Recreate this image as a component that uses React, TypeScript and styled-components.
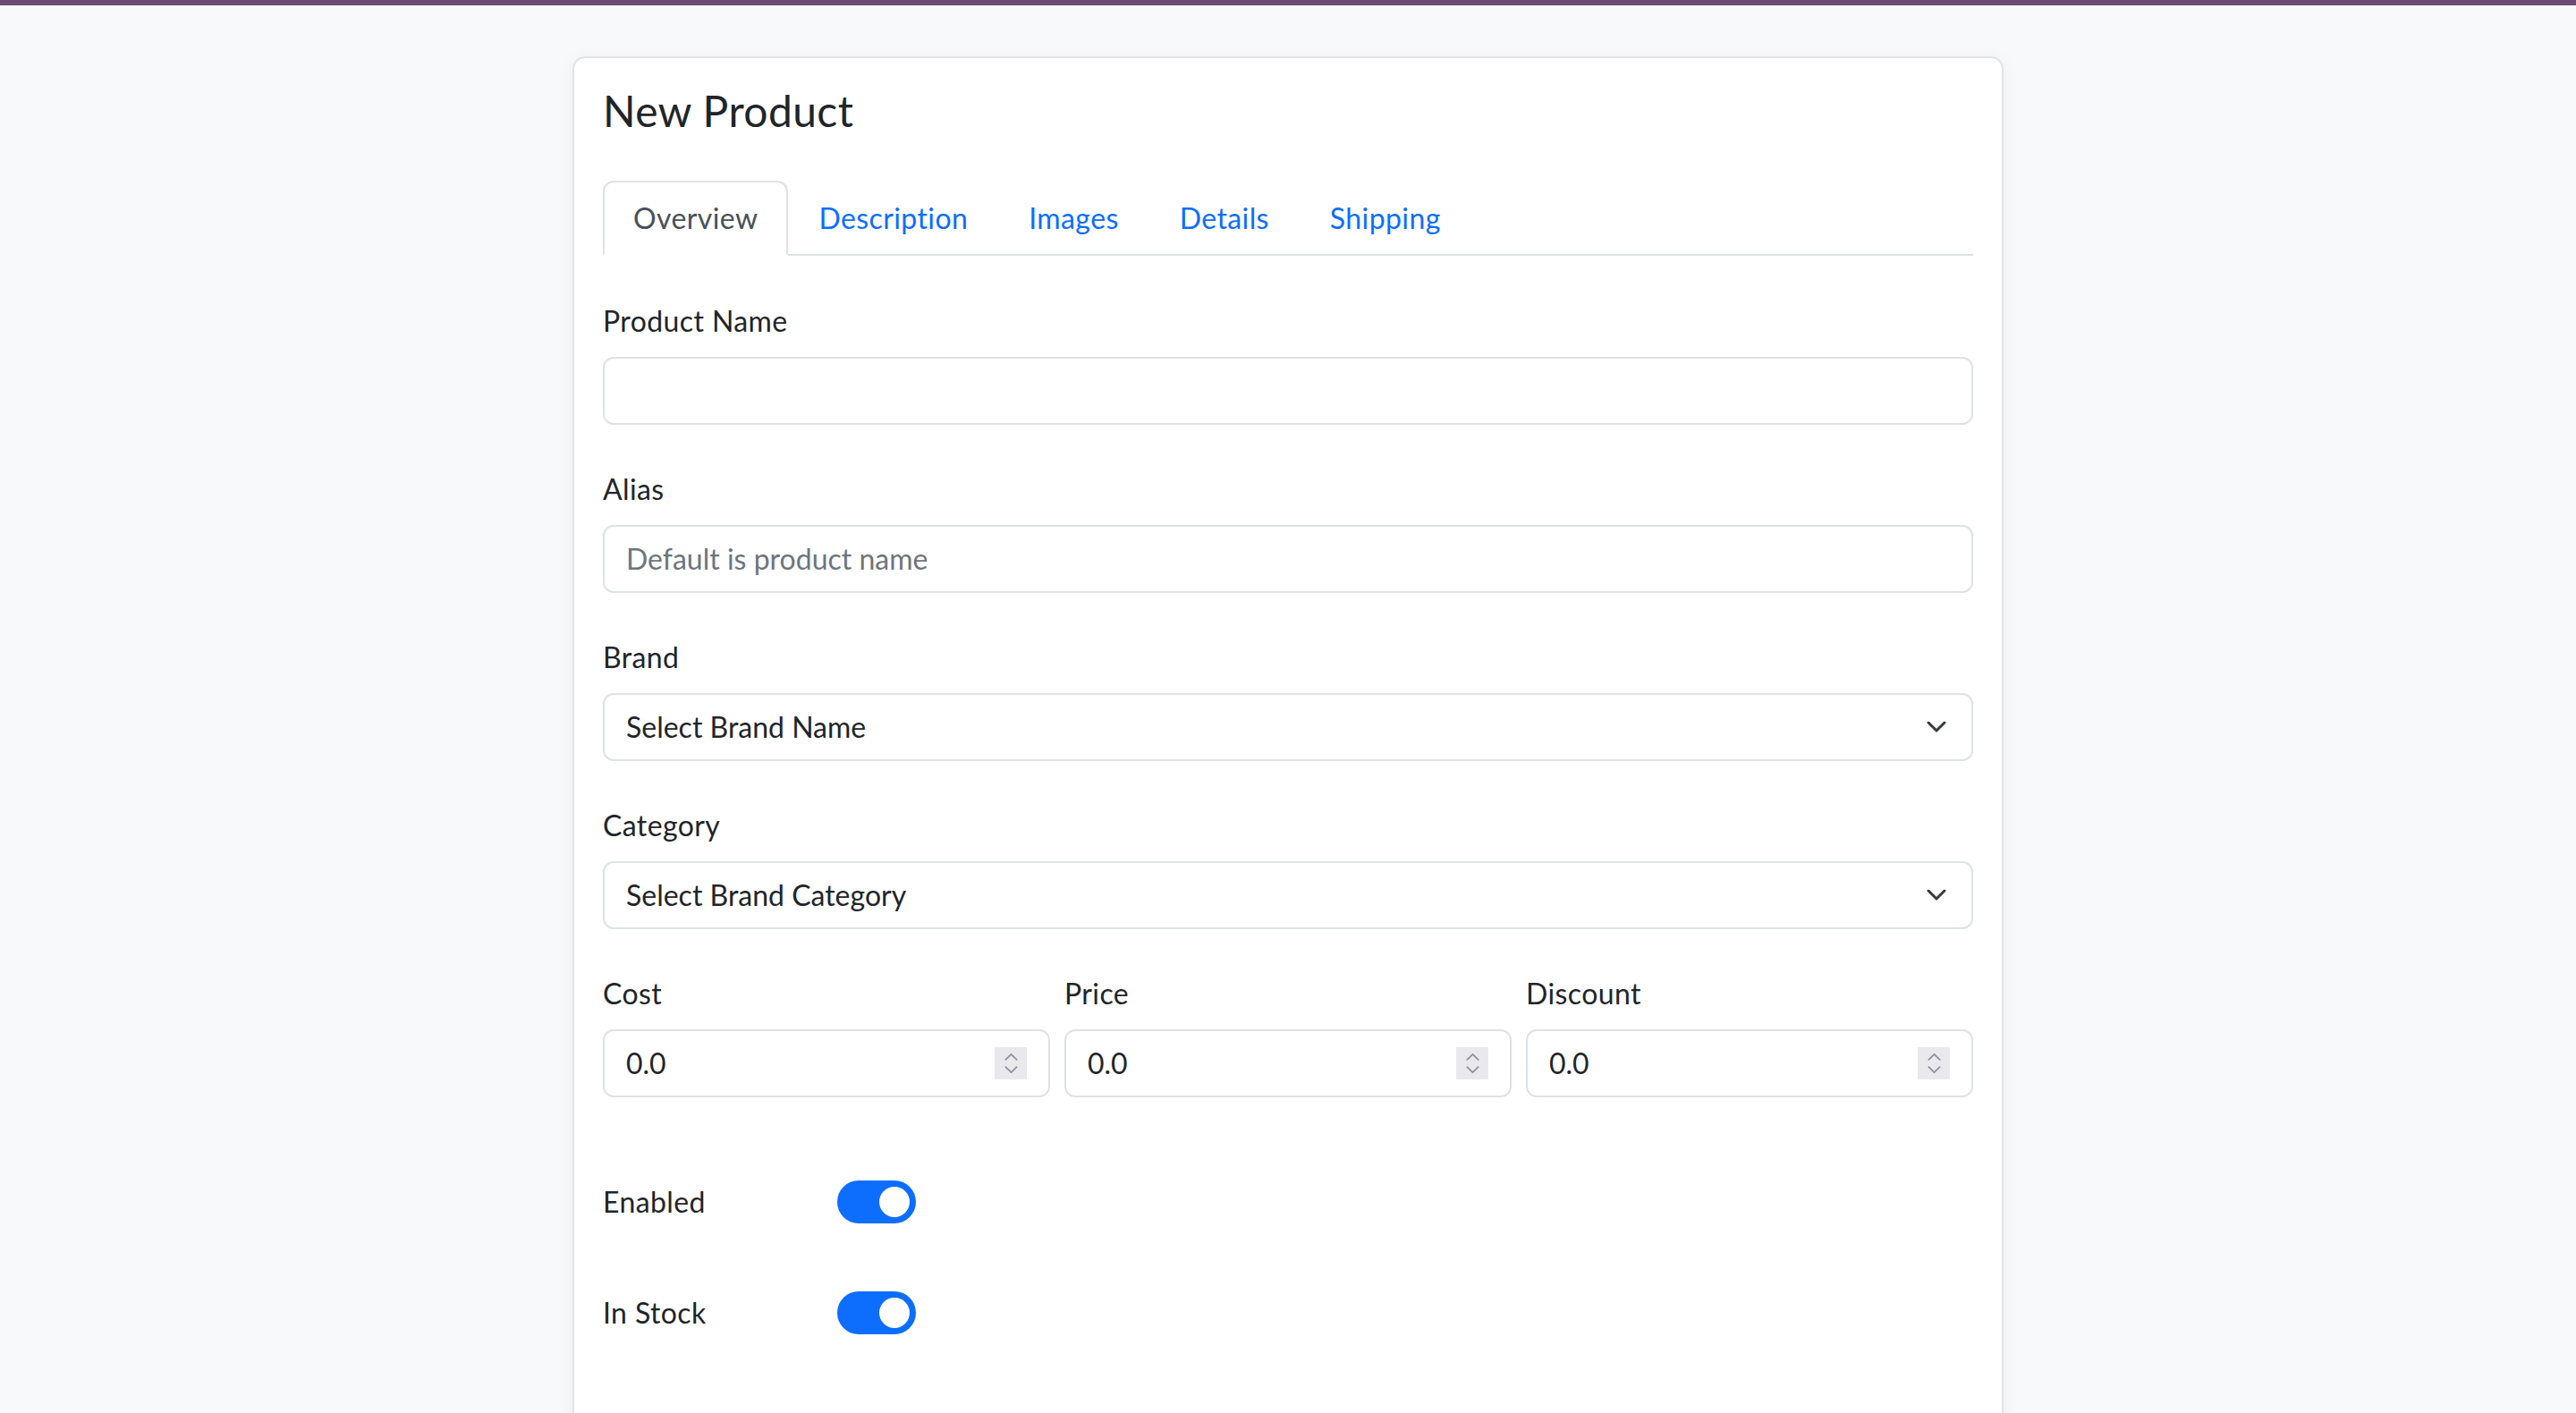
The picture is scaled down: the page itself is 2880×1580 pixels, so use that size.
import { FC } from 'react'
import styled, { createGlobalStyle } from 'styled-components'

const GlobalStyle = createGlobalStyle`
   html, body {
      margin: 0;
      background: #f8f9fa;
      font-family: Lato, 'Noto Sans', 'Liberation Sans', sans-serif;
      letter-spacing: 0.4px;
      color: #212529;
   }
   * {
      box-sizing: border-box;
   }
`

const tabs = ['Overview', 'Description', 'Images', 'Details', 'Shipping']

const Chevron: FC<{ up?: boolean; size?: number; color?: string; stroke?: number }> = ({
   up,
   size = 22,
   color = '#343a40',
   stroke = 3,
}) => (
   <svg width={size} height={size * 0.6} viewBox="0 0 22 13" fill="none">
      <path
         d={up ? 'M2 11.5L11 2.5L20 11.5' : 'M2 1.5L11 10.5L20 1.5'}
         stroke={color}
         strokeWidth={stroke}
         strokeLinecap="round"
         strokeLinejoin="round"
      />
   </svg>
)

const NumberField: FC<{ label: string }> = ({ label }) => (
   <Group>
      <Label>{label}</Label>
      <NumberBox>
         <BareInput type="text" defaultValue="0.0" />
         <Spinner>
            <Chevron up size={15} color="#8f8f9d" stroke={2.6} />
            <Chevron size={15} color="#8f8f9d" stroke={2.6} />
         </Spinner>
      </NumberBox>
   </Group>
)

const SelectField: FC<{ label: string; placeholder: string }> = ({ label, placeholder }) => (
   <Group>
      <Label>{label}</Label>
      <SelectWrap>
         <Select defaultValue="">
            <option value="">{placeholder}</option>
         </Select>
         <SelectIcon>
            <Chevron />
         </SelectIcon>
      </SelectWrap>
   </Group>
)

const Toggle: FC<{ label: string; on?: boolean }> = ({ label, on = true }) => (
   <SwitchRow>
      <SwitchLabel>{label}</SwitchLabel>
      <Switch role="switch" aria-checked={on} $on={on}>
         <Knob $on={on} />
      </Switch>
   </SwitchRow>
)

const App: FC = () => {
   return (
      <>
         <GlobalStyle />
         <TopBar />
         <Page>
            <Card>
               <Title>New Product</Title>
               <TabBar>
                  {tabs.map((t, i) => (
                     <Tab key={t} $active={i === 0}>
                        {t}
                     </Tab>
                  ))}
               </TabBar>
               <TabBody>
                  <Group>
                     <Label>Product Name</Label>
                     <TextInput type="text" />
                  </Group>
                  <Group>
                     <Label>Alias</Label>
                     <TextInput type="text" placeholder="Default is product name" />
                  </Group>
                  <SelectField label="Brand" placeholder="Select Brand Name" />
                  <SelectField label="Category" placeholder="Select Brand Category" />
                  <PriceRow>
                     <NumberField label="Cost" />
                     <NumberField label="Price" />
                     <NumberField label="Discount" />
                  </PriceRow>
                  <Toggle label="Enabled" />
                  <Toggle label="In Stock" />
               </TabBody>
            </Card>
         </Page>
      </>
   )
}

const TopBar = styled.div`
   height: 6px;
   background: #6d4a73;
`

const Page = styled.div`
   display: flex;
   justify-content: center;
   padding-top: 57px;
`

const Card = styled.div`
   width: 1600px;
   background: #fff;
   border: 2px solid #e1e3e6;
   border-radius: 14px;
   padding: 30px 32px 260px;
   box-shadow: 0 2px 18px rgba(0, 0, 0, 0.05);
`

const Title = styled.h1`
   margin: 0 0 49px;
   font-size: 48px;
   font-weight: 400;
   line-height: 1.2;
   color: #212529;
`

const TabBar = styled.nav`
   display: flex;
   border-bottom: 2px solid #dee2e6;
`

const Tab = styled.a<{ $active?: boolean }>`
   display: block;
   padding: 16px 32px;
   margin-bottom: -2px;
   font-size: 32px;
   line-height: 48px;
   border: 2px solid ${p => (p.$active ? '#dee2e6' : 'transparent')};
   border-bottom-color: ${p => (p.$active ? '#fff' : 'transparent')};
   border-radius: 12px 12px 0 0;
   background: ${p => (p.$active ? '#fff' : 'transparent')};
   color: ${p => (p.$active ? '#495057' : '#0d6efd')};
   cursor: pointer;
`

const TabBody = styled.div`
   padding-top: 49px;
`

const Group = styled.div`
   margin-bottom: 48px;
`

const Label = styled.label`
   display: block;
   margin-bottom: 16px;
   font-size: 32px;
   line-height: 48px;
   color: #212529;
`

const TextInput = styled.input`
   display: block;
   width: 100%;
   height: 76px;
   padding: 12px 24px;
   font: inherit;
   font-size: 32px;
   line-height: 48px;
   color: #212529;
   background: #fff;
   border: 2px solid #dee2e6;
   border-radius: 12px;
   outline: none;

   &::placeholder {
      color: #6c757d;
   }
`

const SelectWrap = styled.div`
   position: relative;
`

const Select = styled.select`
   display: block;
   width: 100%;
   height: 76px;
   padding: 12px 72px 12px 24px;
   font: inherit;
   font-size: 32px;
   line-height: 48px;
   color: #212529;
   background: #fff;
   border: 2px solid #dee2e6;
   border-radius: 12px;
   appearance: none;
   outline: none;
`

const SelectIcon = styled.span`
   position: absolute;
   right: 30px;
   top: 50%;
   transform: translateY(-50%);
   display: flex;
   pointer-events: none;
`

const PriceRow = styled.div`
   display: grid;
   grid-template-columns: repeat(3, 1fr);
   column-gap: 16px;
   margin-bottom: 45px;
`

const NumberBox = styled.div`
   display: flex;
   align-items: center;
   height: 76px;
   padding: 0 24px;
   border: 2px solid #dee2e6;
   border-radius: 12px;
   background: #fff;
`

const BareInput = styled.input`
   flex: 1;
   min-width: 0;
   border: none;
   padding: 0;
   font: inherit;
   font-size: 32px;
   line-height: 48px;
   color: #212529;
   background: transparent;
   outline: none;
`

const Spinner = styled.span`
   display: flex;
   flex-direction: column;
   align-items: center;
   justify-content: center;
   gap: 6px;
   width: 36px;
   height: 36px;
   background: #e9e9ed;
`

const SwitchRow = styled.div`
   display: grid;
   grid-template-columns: 262px auto;
   align-items: center;
   justify-content: start;
   margin-bottom: 76px;
`

const SwitchLabel = styled.span`
   font-size: 32px;
   line-height: 48px;
   color: #212529;
`

const Switch = styled.button<{ $on?: boolean }>`
   display: flex;
   align-items: center;
   justify-content: ${p => (p.$on ? 'flex-end' : 'flex-start')};
   width: 88px;
   height: 48px;
   padding: 0 7px;
   border: none;
   border-radius: 24px;
   background: ${p => (p.$on ? '#0d6efd' : '#dee2e6')};
   cursor: pointer;
`

const Knob = styled.span<{ $on?: boolean }>`
   width: 34px;
   height: 34px;
   border-radius: 50%;
   background: #fff;
`

export default App
